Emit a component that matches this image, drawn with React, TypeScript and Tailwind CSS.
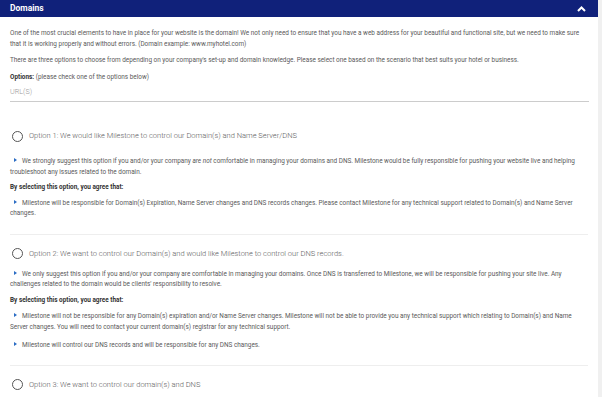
const Bullet = () => (
  <span className="inline-block w-0 h-0 border-l-[3px] border-l-[#2b6cc4] border-y-[2px] border-y-transparent ml-[4px] mr-[5px] align-[1px]" />
);

const Radio = () => (
  <span className="inline-block w-[11px] h-[11px] rounded-full border border-[#555] mr-[6px] shrink-0" />
);

const App = () => {
  return (
    <div className="w-[602px] h-[397px] overflow-hidden bg-white flex font-['Roboto',sans-serif]">
      <div className="w-[598px] flex flex-col">
        <header className="h-[17px] bg-[#10217a] flex items-center justify-between pl-[10px] pr-[12px]">
          <h1 className="text-white font-bold text-[8.5px]">Domains</h1>
          <svg width="9" height="6" viewBox="0 0 9 6">
            <polyline points="1,5 4.5,1.5 8,5" fill="none" stroke="white" strokeWidth="2" />
          </svg>
        </header>

        <div className="px-[10px] text-[6.4px] leading-[10.5px] text-[#5a5a5a]">
          <p className="mt-[11px]">
            One of the most crucial elements to have in place for your website is the domain! We not only need to ensure that you have a web address for your beautiful and functional site, but we need to make sure that it is working properly and without errors. (Domain example: www.myhotel.com)
          </p>
          <p className="mt-[6px]">
            There are three options to choose from depending on your company's set-up and domain knowledge. Please select one based on the scenario that best suits your hotel or business.
          </p>
          <p className="mt-[6px]">
            <span className="font-bold text-[#333]">Options:</span> (please check one of the options below)
          </p>
          <div className="mt-[5px] pb-[4px] border-b border-[#ccc] mr-[-1px] text-[7.2px] font-light text-[#999] leading-[10px]">
            URL(S)
          </div>

          <div className="pb-[15px] border-b border-[#eee]">
            <div className="mt-[28px] flex items-center text-[7.5px] font-light text-[#5c5c5c] leading-[12px] pl-[2px]">
              <Radio />
              Option 1: We would like Milestone to control our Domain(s) and Name Server/DNS
            </div>
            <p className="mt-[14px]">
              <Bullet />
              We strongly suggest this option if you and/or your company <em>are not</em> comfortable in managing your domains and DNS. Milestone would be fully responsible for pushing your website live and helping troubleshoot any issues related to the domain.
            </p>
            <p className="mt-[5px] font-bold text-[#333]">By selecting this option, you agree that:</p>
            <p className="mt-[5px]">
              <Bullet />
              Milestone will be responsible for Domain(s) Expiration, Name Server changes and DNS records changes. Please contact Milestone for any technical support related to Domain(s) and Name Server changes.
            </p>
          </div>

          <div className="pb-[14px] border-b border-[#eee]">
            <div className="mt-[13px] flex items-center text-[7.5px] font-light text-[#5c5c5c] leading-[12px] pl-[2px]">
              <Radio />
              Option 2: We want to control our Domain(s) and would like Milestone to control our DNS records.
            </div>
            <p className="mt-[9px]">
              <Bullet />
              We only suggest this option if you and/or your company are comfortable in managing your domains. Once DNS is transferred to Milestone, we will be responsible for pushing your site live. Any challenges related to the domain would be clients' responsibility to resolve.
            </p>
            <p className="mt-[5px] font-bold text-[#333]">By selecting this option, you agree that:</p>
            <p className="mt-[6px]">
              <Bullet />
              Milestone will not be responsible for any Domain(s) expiration and/or Name Server changes. Milestone will not be able to provide you any technical support which relating to Domain(s) and Name Server changes. You will need to contact your current domain(s) registrar for any technical support.
            </p>
            <p className="mt-[8px]">
              <Bullet />
              Milestone will control our DNS records and will be responsible for any DNS changes.
            </p>
          </div>

          <div className="mt-[13px] flex items-center text-[7.5px] font-light text-[#5c5c5c] leading-[12px] pl-[2px]">
            <Radio />
            Option 3: We want to control our domain(s) and DNS
          </div>
        </div>
      </div>
      <div className="w-[4px] bg-[#f0f0f0]" />
    </div>
  );
};

export default App;
